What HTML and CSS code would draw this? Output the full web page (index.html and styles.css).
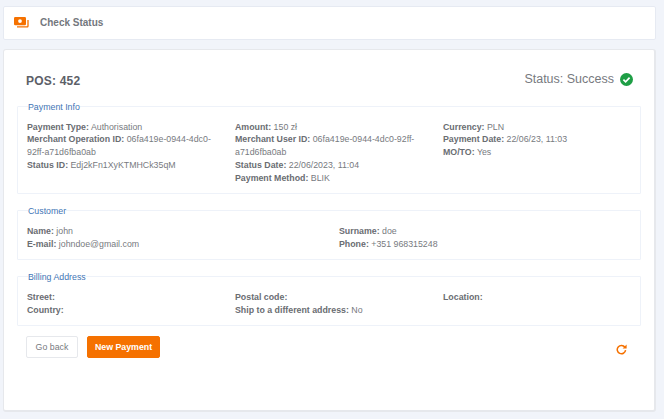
FILE: index.html
```html
<!DOCTYPE html>
<html lang="en">
<head>
<meta charset="utf-8">
<title>Check Status</title>
<link rel="stylesheet" href="styles.css">
</head>
<body>
<header class="topbar">
  <svg class="topicon" width="15" height="11" viewBox="0 0 15 11"><path d="M3 9.9h10.2a.8.8 0 0 0 .8-.8V3" fill="none" stroke="#f57100" stroke-width="1.3"/><rect x="0" y="0" width="12" height="8.2" rx="1.2" fill="#f57100"/><circle cx="6" cy="4.1" r="1.9" fill="#fff"/></svg>
  <span class="toptitle">Check Status</span>
</header>
<main class="card">
  <div class="headrow">
    <h1 class="pos">POS: 452</h1>
    <div class="status">Status: Success
      <svg class="check" width="13" height="13" viewBox="0 0 13 13"><circle cx="6.5" cy="6.5" r="6.5" fill="#1e9e45"/><path d="M3.4 6.7l2.2 2.2 4-4.2" fill="none" stroke="#fff" stroke-width="1.7"/></svg>
    </div>
  </div>
  <fieldset class="box">
    <legend>Payment Info</legend>
    <div class="cols three">
      <div class="col">
        <p><b>Payment Type:</b> Authorisation</p>
        <p><b>Merchant Operation ID:</b> 06fa419e-0944-4dc0-92ff-a71d6fba0ab</p>
        <p><b>Status ID:</b> Edj2kFn1XyKTMHCk35qM</p>
      </div>
      <div class="col">
        <p><b>Amount:</b> 150 zł</p>
        <p><b>Merchant User ID:</b> 06fa419e-0944-4dc0-92ff-a71d6fba0ab</p>
        <p><b>Status Date:</b> 22/06/2023, 11:04</p>
        <p><b>Payment Method:</b> BLIK</p>
      </div>
      <div class="col">
        <p><b>Currency:</b> PLN</p>
        <p><b>Payment Date:</b> 22/06/23, 11:03</p>
        <p><b>MO/TO:</b> Yes</p>
      </div>
    </div>
  </fieldset>
  <fieldset class="box">
    <legend>Customer</legend>
    <div class="cols two">
      <div class="col">
        <p><b>Name:</b> john</p>
        <p><b>E-mail:</b> johndoe@gmail.com</p>
      </div>
      <div class="col">
        <p><b>Surname:</b> doe</p>
        <p><b>Phone:</b> +351 968315248</p>
      </div>
    </div>
  </fieldset>
  <fieldset class="box">
    <legend>Billing Address</legend>
    <div class="cols three">
      <div class="col">
        <p><b>Street:</b></p>
        <p><b>Country:</b></p>
      </div>
      <div class="col">
        <p><b>Postal code:</b></p>
        <p><b>Ship to a different address:</b> No</p>
      </div>
      <div class="col">
        <p><b>Location:</b></p>
      </div>
    </div>
  </fieldset>
  <div class="actions">
    <button class="btn ghost" type="button">Go back</button>
    <button class="btn primary" type="button">New Payment</button>
    <svg class="refresh" width="11" height="11" viewBox="0 0 11 11"><path d="M8.9 3.2A4.2 4.2 0 1 0 9.6 6.2" fill="none" stroke="#f57100" stroke-width="1.5"/><path d="M10.6 .6v4H6.6z" fill="#f57100"/></svg>
  </div>
</main>
</body>
</html>
```
FILE: styles.css
```css
* { box-sizing: border-box; }
html, body { height: 100%; }
body {
  margin: 0;
  padding: 6px 8px 8px 3px;
  background: #f1f4fa;
  font-family: "Liberation Sans", Arial, sans-serif;
  color: #6e7178;
  overflow: hidden;
}
.topbar {
  height: 34px;
  display: flex;
  align-items: center;
  padding: 0 0 2px 10px;
  background: #fff;
  border: 1px solid #e6eaf2;
  border-radius: 2px;
}
.topicon { display: block; margin-right: 11px; }
.toptitle { font-size: 10px; font-weight: bold; color: #74777d; }
.card {
  margin-top: 9px;
  height: 363px;
  padding: 0 13px;
  background: #fff;
  border: 1px solid #e6e8ec;
  border-bottom-width: 2px;
  border-right-width: 2px;
  border-radius: 3px;
}
.headrow {
  height: 49.5px;
  padding: 13px 8px 0 9px;
  display: flex;
  justify-content: space-between;
  align-items: center;
}
.pos { margin: 0; font-size: 12px; font-weight: bold; color: #5c6068; letter-spacing: .2px; }
.status { display: flex; align-items: center; gap: 6px; margin-bottom: 4px; font-size: 12.5px; color: #777a80; }
.check { display: block; }
.box {
  margin: 0 0 10px;
  padding: 8px 0 8.5px 9px;
  min-width: 0;
  border: 1px solid #eef2f9;
  border-radius: 1px;
}
.box legend {
  margin-left: 1px;
  padding: 1px 0 0;
  font-size: 8.8px;
  line-height: 12px;
  color: #3f75b5;
}
.cols { display: grid; }
.three { grid-template-columns: 208px 208px 1fr; }
.two { grid-template-columns: 312px 1fr; }
.col { padding-right: 16px; min-width: 0; }
.col p { margin: 0; font-size: 8.8px; line-height: 12.8px; color: #777a80; }
.col b { color: #6a6d72; }
.actions { display: flex; align-items: center; margin: 2px 0 0 9px; }
.btn {
  height: 22px;
  font-family: inherit;
  font-size: 8.8px;
  border-radius: 2px;
  padding: 0;
}
.ghost { width: 52px; background: #fff; border: 1px solid #e6e8ec; color: #777a80; }
.primary { width: 73px; margin-left: 9px; background: #f57100; border: 1px solid #f57100; color: #fff; font-weight: bold; }
.refresh { display: block; margin: 5px 14px 0 auto; }
```
